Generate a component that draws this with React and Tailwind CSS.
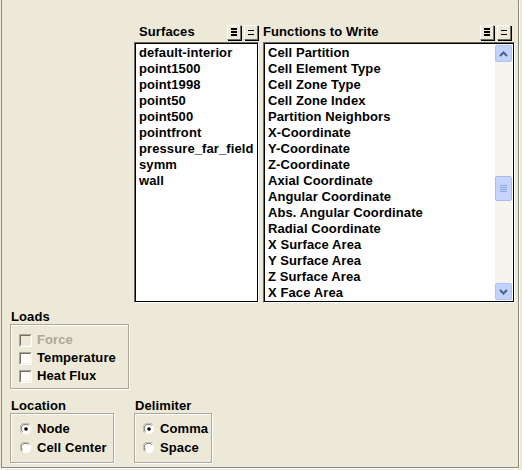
import React from "react";

const surfaces = ["default-interior","point1500","point1998","point50","point500","pointfront","pressure_far_field","symm","wall"];
const funcs = ["Cell Partition","Cell Element Type","Cell Zone Type","Cell Zone Index","Partition Neighbors","X-Coordinate","Y-Coordinate","Z-Coordinate","Axial Coordinate","Angular Coordinate","Abs. Angular Coordinate","Radial Coordinate","X Surface Area","Y Surface Area","Z Surface Area","X Face Area"];

function SmallBtn({ bars }) {
  return (
    <div className="w-[14px] h-[15px] bg-[#ECE9D8] border border-t-white border-l-white border-r-[#716F64] border-b-[#716F64] shadow-[1px_1px_0_#000] flex flex-col items-center justify-center gap-[1px]">
      {bars === 3 ? (
        <>
          <div className="w-[6px] h-[2px] bg-black" />
          <div className="w-[6px] h-[2px] bg-black" />
          <div className="w-[6px] h-[2px] bg-black" />
        </>
      ) : (
        <>
          <div className="w-[6px] h-[1px] bg-black" />
          <div className="w-[6px] h-[1px] bg-black mt-[2px]" />
        </>
      )}
    </div>
  );
}

function ListBox({ items, width, scroll }) {
  return (
    <div className="relative h-[261px] bg-white border border-t-[#716F64] border-l-[#716F64] border-r-white border-b-white overflow-hidden" style={{ width }}>
      <div className="absolute inset-0 border border-black" />
      <div className="pl-[4px] pt-[2px] overflow-hidden h-full">
        {items.map((t) => (
          <div key={t} className="h-[16px] leading-[16px] whitespace-nowrap">{t}</div>
        ))}
      </div>
      {scroll && (
        <div className="absolute top-[1px] bottom-[1px] right-[2px] w-[17px] bg-[#F5F4EE] flex flex-col">
          <div className="mt-[1px] w-[17px] h-[17px] rounded-[2px] bg-[#C1D3FB] border border-[#B0C3EC] flex items-center justify-center">
            <svg width="9" height="6" viewBox="0 0 9 6"><path d="M1 5 L4.5 1.5 L8 5" stroke="#4D6185" strokeWidth="2" fill="none" /></svg>
          </div>
          <div className="h-[114px]" />
          <div className="w-[17px] h-[25px] rounded-[2px] bg-[#C4D4FB] border border-[#A8BCEA] flex flex-col items-center justify-center gap-[1px]">
            <div className="w-[7px] h-[1px] bg-[#8CA6E4]" />
            <div className="w-[7px] h-[1px] bg-[#8CA6E4]" />
            <div className="w-[7px] h-[1px] bg-[#8CA6E4]" />
            <div className="w-[7px] h-[1px] bg-[#8CA6E4]" />
          </div>
          <div className="flex-1" />
          <div className="mb-[1px] w-[17px] h-[17px] rounded-[2px] bg-[#C1D3FB] border border-[#B0C3EC] flex items-center justify-center">
            <svg width="9" height="6" viewBox="0 0 9 6"><path d="M1 1 L4.5 4.5 L8 1" stroke="#4D6185" strokeWidth="2" fill="none" /></svg>
          </div>
        </div>
      )}
    </div>
  );
}

function Group({ children, width, height }) {
  return (
    <div className="border border-[#ACA899] shadow-[inset_1px_1px_0_white,1px_1px_0_white]" style={{ width, height }}>
      {children}
    </div>
  );
}

function Check({ label, disabled }) {
  return (
    <div className="flex items-center h-[18px]">
      <div className={`w-[13px] h-[13px] border border-t-[#ACA899] border-l-[#ACA899] border-r-white border-b-white ${disabled ? "bg-[#ECE9D8]" : "bg-white"}`}>
        <div className="w-full h-full border border-t-[#716F64] border-l-[#716F64] border-r-[#F1EFE2] border-b-[#F1EFE2]" />
      </div>
      <span className={`ml-[5px] ${disabled ? "text-[#ACA899]" : "text-black"}`}>{label}</span>
    </div>
  );
}

function Radio({ label, checked }) {
  return (
    <div className="flex items-center h-[19px]">
      <svg width="12" height="12" viewBox="0 0 12 12">
        <circle cx="6" cy="6" r="5.5" fill="white" stroke="#ECE9D8" />
        <path d="M1.5 9.5 A5 5 0 0 1 9.5 1.5" stroke="#ACA899" strokeWidth="1" fill="none" />
        <path d="M2.5 8.5 A4 4 0 0 1 8.5 2.5" stroke="#716F64" strokeWidth="1" fill="none" />
        {checked && <circle cx="6" cy="6" r="1.8" fill="black" />}
      </svg>
      <span className="ml-[5px]">{label}</span>
    </div>
  );
}

export default function App() {
  return (
    <div className="w-[522px] h-[470px] bg-[#ECE9D8] text-[13px] font-bold text-black overflow-hidden tracking-[0.1px]" style={{ fontFamily: '"Liberation Sans", Arial, sans-serif' }}>
      <div className="ml-[1px] w-[518px] h-[468px] border-l border-r border-b border-[#8C8A80] shadow-[1px_1px_0_white]">
        <div className="flex pl-[132px] pt-[24px] gap-[4px]">
          <div className="flex flex-col">
            <div className="flex items-center h-[16px] mb-[2px]">
              <span className="ml-[5px] flex-1">Surfaces</span>
              <div className="flex gap-[3px] mr-[1px]">
                <SmallBtn bars={3} />
                <SmallBtn bars={2} />
              </div>
            </div>
            <ListBox items={surfaces} width={125} />
          </div>
          <div className="flex flex-col">
            <div className="flex items-center h-[16px] mb-[2px]">
              <span className="flex-1">Functions to Write</span>
              <div className="flex gap-[3px] mr-[4px]">
                <SmallBtn bars={3} />
                <SmallBtn bars={2} />
              </div>
            </div>
            <ListBox items={funcs} width={252} scroll />
          </div>
        </div>
        <div className="pl-[8px] mt-[6px]">
          <div className="h-[15px] leading-[15px] ml-[1px]">Loads</div>
          <Group width={119} height={65}>
            <div className="pl-[8px] pt-[6px]">
              <Check label="Force" disabled />
              <Check label="Temperature" />
              <Check label="Heat Flux" />
            </div>
          </Group>
          <div className="flex gap-[20px] mt-[9px]">
            <div>
              <div className="h-[15px] leading-[15px] ml-[1px]">Location</div>
              <Group width={104} height={50}>
                <div className="pl-[9px] pt-[5px]">
                  <Radio label="Node" checked />
                  <Radio label="Cell Center" />
                </div>
              </Group>
            </div>
            <div>
              <div className="h-[15px] leading-[15px] ml-[1px]">Delimiter</div>
              <Group width={78} height={50}>
                <div className="pl-[8px] pt-[5px]">
                  <Radio label="Comma" checked />
                  <Radio label="Space" />
                </div>
              </Group>
            </div>
          </div>
        </div>
      </div>
    </div>
  );
}
